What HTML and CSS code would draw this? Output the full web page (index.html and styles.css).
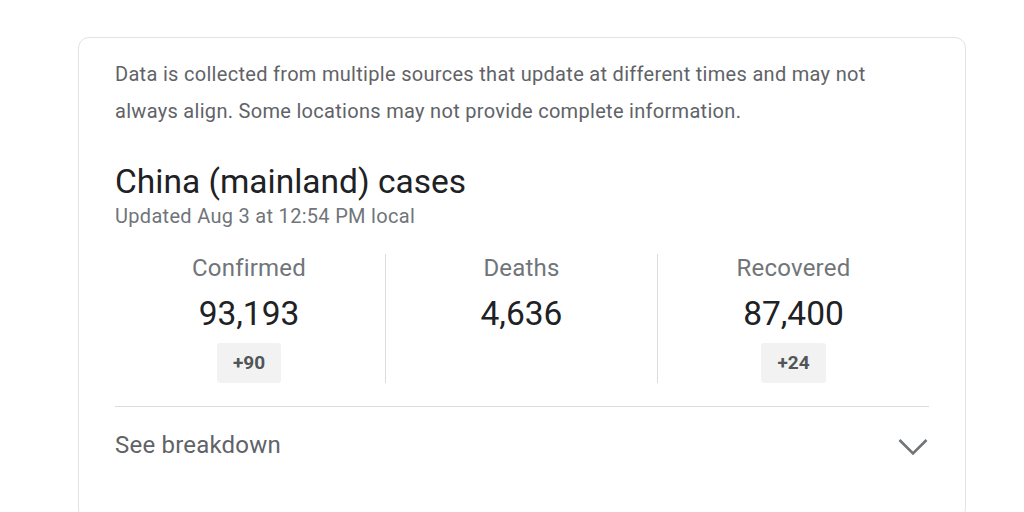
FILE: index.html
```html
<!DOCTYPE html>
<html lang="en">
<head>
<meta charset="UTF-8" />
<meta name="viewport" content="width=device-width, initial-scale=1" />
<title>China (mainland) cases</title>
<link rel="stylesheet" href="styles.css">
</head>
<body>
<div class="card">
  <p class="note">Data is collected from multiple sources that update at different times and may not always align. Some locations may not provide complete information.</p>

  <h2 class="title">China (mainland) cases</h2>
  <div class="updated">Updated Aug 3 at 12:54 PM local</div>

  <div class="stats">
    <div class="stat">
      <div class="label">Confirmed</div>
      <div class="value">93,193</div>
      <div class="delta">+90</div>
    </div>
    <div class="stat">
      <div class="label">Deaths</div>
      <div class="value">4,636</div>
    </div>
    <div class="stat">
      <div class="label">Recovered</div>
      <div class="value">87,400</div>
      <div class="delta">+24</div>
    </div>
  </div>

  <div class="breakdown">
    <span>See breakdown</span>
    <svg class="chevron" width="32" height="20" viewBox="0 0 32 20">
      <polyline points="2.5,3 16,16.5 29.5,3" fill="none" stroke="#70757a" stroke-width="2.6" />
    </svg>
  </div>
</div>
</body>
</html>
```

FILE: styles.css
```css
* {
  box-sizing: border-box;
}
body {
  margin: 0;
  background: #fff;
  font-family: Roboto, 'Liberation Sans', Arial, sans-serif;
  color: #202124;
}
.card {
  width: 888px;
  margin: 37px 0 0 78px;
  padding: 18px 36px 60px;
  border: 1px solid #e2e3e5;
  border-radius: 11px;
}
.note {
  margin: 0;
  font-size: 20px;
  letter-spacing: 0.3px;
  line-height: 37px;
  color: #5f6368;
}
.title {
  margin: 32px 0 0;
  font-size: 33.5px;
  font-weight: 400;
  line-height: 40px;
  color: #202124;
}
.updated {
  margin-top: 2px;
  font-size: 20px;
  letter-spacing: 0.3px;
  line-height: 24px;
  color: #70757a;
}
.stats {
  display: grid;
  grid-template-columns: repeat(3, 1fr);
  margin: 26px 0 0 -2px;
}
.stat {
  display: flex;
  flex-direction: column;
  align-items: center;
  border-left: 1px solid #dadce0;
}
.stat:first-child {
  border-left: none;
}
.label {
  font-size: 24px;
  letter-spacing: 0.2px;
  line-height: 28px;
  color: #70757a;
}
.value {
  margin-top: 12px;
  font-size: 33.5px;
  line-height: 40px;
  color: #202124;
}
.delta {
  margin-top: 9px;
  height: 40px;
  padding: 0 16px;
  line-height: 40px;
  font-size: 19px;
  font-weight: 700;
  color: #515558;
  background: #f2f2f2;
  border-radius: 3px;
}
.breakdown {
  display: flex;
  align-items: center;
  justify-content: space-between;
  margin-top: 23px;
  padding-top: 24px;
  border-top: 1px solid #dadce0;
  font-size: 24px;
  letter-spacing: 0.2px;
  line-height: 28px;
  color: #5f6368;
}
.chevron {
  display: block;
  margin-top: 4px;
}
```
